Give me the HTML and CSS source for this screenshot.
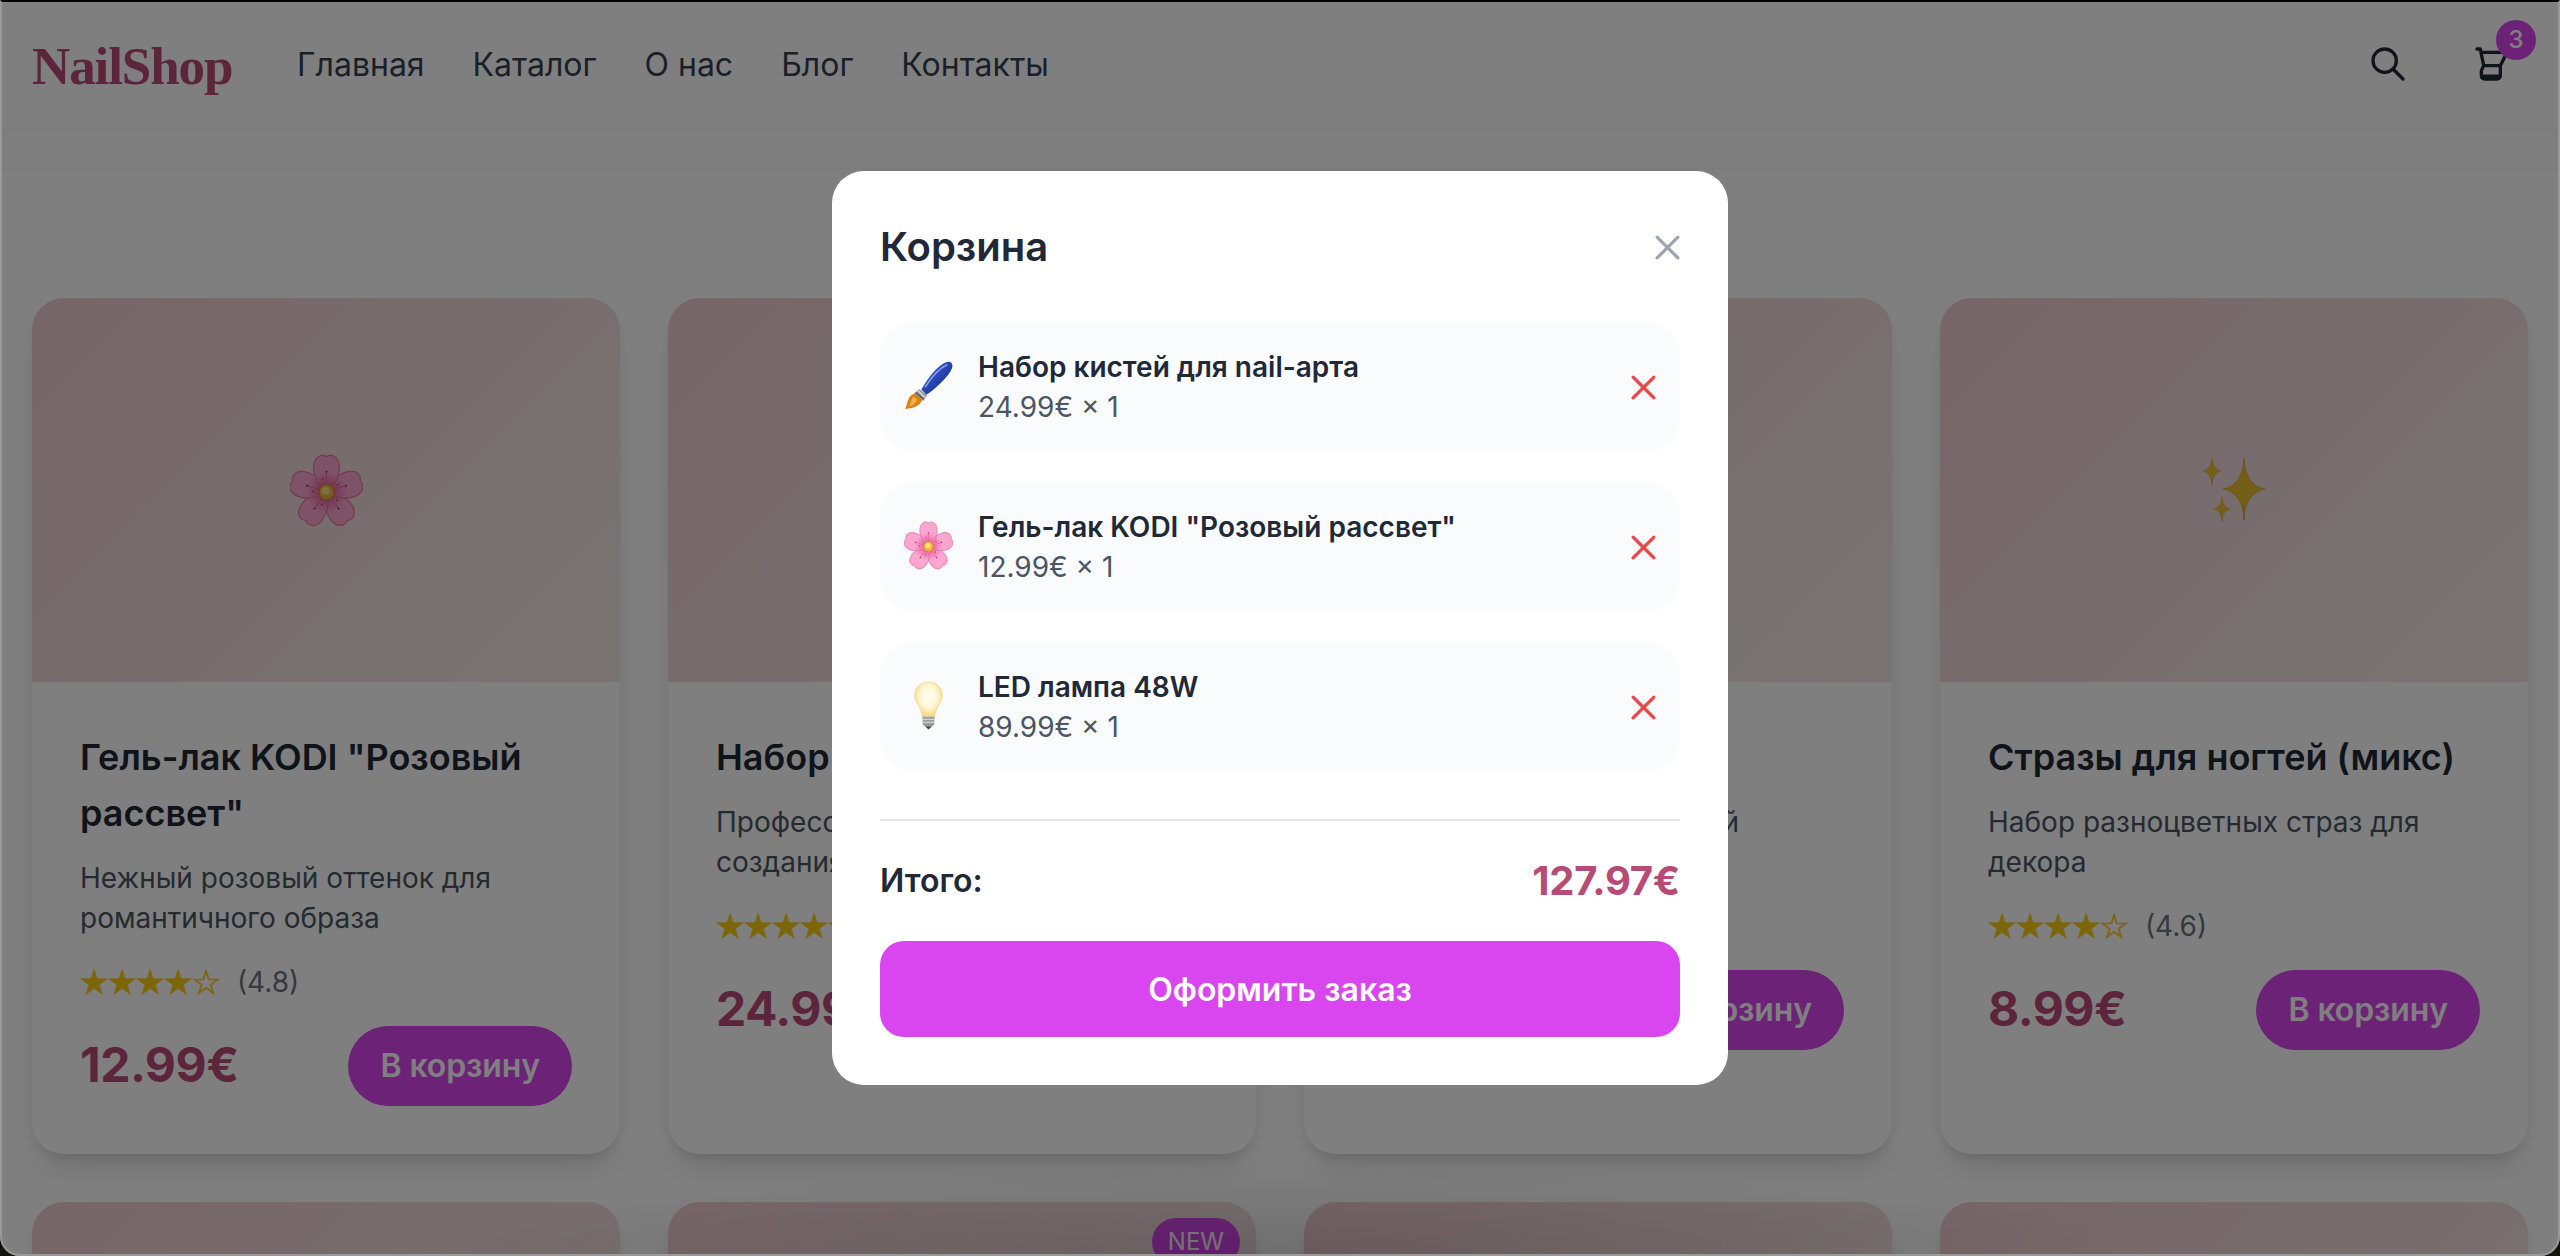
FILE: index.html
```html
<!DOCTYPE html>
<html lang="ru">
<head>
<meta charset="utf-8">
<title>NailShop</title>
<link rel="stylesheet" href="styles.css">
</head>
<body>
<svg class="sprite" aria-hidden="true">
  <defs>
    <radialGradient id="petal-fill" gradientUnits="userSpaceOnUse" cx="24" cy="25" r="25">
      <stop offset="0" stop-color="#d93a80"/><stop offset=".28" stop-color="#f07aae"/><stop offset=".55" stop-color="#fda6d4"/><stop offset="1" stop-color="#fba6cd"/>
    </radialGradient>
    <linearGradient id="handle-fill" x1="0" y1="0" x2="1" y2="1">
      <stop offset="0" stop-color="#6f8de8"/><stop offset=".4" stop-color="#2b4cc0"/><stop offset="1" stop-color="#14236e"/>
    </linearGradient>
    <radialGradient id="bulb-fill" cx=".5" cy=".42" r=".58">
      <stop offset="0" stop-color="#fffef8"/><stop offset=".55" stop-color="#fff6d2"/><stop offset="1" stop-color="#f3d77c"/>
    </radialGradient>
    <path id="petal" d="M24 25C19 22 14.800 14 15.600 7.500C16.200 2 20.500 -.5 24 1.800C27.500 -.5 31.800 2 32.400 7.500C33.200 14 29 22 24 25Z" fill="url(#petal-fill)" stroke="#e0709c" stroke-width=".7"/>
    <g id="stamen"><path d="M24 20V12" stroke="#e0609a" stroke-width=".5"/><circle cx="24" cy="11.600" r=".65" fill="#8a2450"/><circle cx="21.700" cy="16.500" r=".5" fill="#8a2450"/></g>
    <path id="spark" d="M0-32Q1-3.500 14 0Q1 3.500 0 32Q-1-0 0 32Q-1 3.500-14 0Q-1-3.500 0-32Z"/>
  </defs>
  <symbol id="flower" viewBox="0 0 48 48">
    <use href="#petal" transform="rotate(144 24 25)"/><use href="#petal" transform="rotate(216 24 25)"/>
    <use href="#petal" transform="rotate(72 24 25)"/><use href="#petal" transform="rotate(288 24 25)"/><use href="#petal"/>
    <use href="#stamen"/><use href="#stamen" transform="rotate(72 24 25)"/><use href="#stamen" transform="rotate(144 24 25)"/><use href="#stamen" transform="rotate(216 24 25)"/><use href="#stamen" transform="rotate(288 24 25)"/>
    <circle cx="24" cy="25" r="5" fill="#eeb53a" stroke="#cf7c35" stroke-width=".6"/><circle cx="23.500" cy="24.200" r="2.600" fill="#fbe27a"/>
  </symbol>
  <symbol id="brush" viewBox="0 0 48 48">
    <path d="M17 28C23 17 33 4 42 1C46 0 48.500 3 47 7C44 15 31 27 22 33Z" fill="url(#handle-fill)"/>
    <path d="M21 25C27 16 35 7 42 4" stroke="#a9bcf5" stroke-width="1.600" stroke-linecap="round" fill="none" opacity=".75"/>
    <path d="M15 27.500L22.500 33.500L19 39L9.500 32Z" fill="#8d9297"/><path d="M13.500 29L20.500 35.500" stroke="#d9dcde" stroke-width="1.500"/><path d="M11.500 31L19.500 37.500" stroke="#4d5154" stroke-width="1"/>
    <path d="M10 32L18 37.500C17 42.500 11 46.500 1 47C4 42 3 34 10 32Z" fill="#d98212"/><path d="M9 35C7 38 7 41 5 44.500C9 43 12 41 13 37.500Z" fill="#f6b24a"/>
  </symbol>
  <symbol id="bulb" viewBox="0 0 48 48">
    <path d="M24 1C32 1 37.500 6.500 37.500 14C37.500 21.500 31 25 30 35H18C17 25 10.500 21.500 10.500 14C10.500 6.500 16 1 24 1Z" fill="url(#bulb-fill)" stroke="#ead08a" stroke-width=".6"/>
    <path d="M18 35H30L29.500 43L26.500 45L24 47.500L21.500 45L18.500 43Z" fill="#9a9d9f"/><path d="M18 37.500H30M18.500 40.500H29.500" stroke="#dfe1e2" stroke-width="1"/><path d="M21 44.500H27L24 47.500Z" fill="#444"/>
  </symbol>
  <symbol id="sparkles" viewBox="0 0 64 64">
    <g fill="#e8bd30" stroke="#d29a28" stroke-width=".5"><use href="#spark" transform="translate(42 31) scale(1.5 .97)"/><use href="#spark" transform="translate(10 13) scale(.66 .45)"/><use href="#spark" transform="translate(20 51) scale(.62 .4)"/></g>
  </symbol>
  <symbol id="cross" viewBox="0 0 24 24"><path d="M2 2L22 22M22 2L2 22" stroke="currentColor" stroke-width="3" stroke-linecap="round" fill="none"/></symbol>
</svg>

<div class="window">
  <header class="header">
    <div class="logo">NailShop</div>
    <nav class="nav"><a>Главная</a><a>Каталог</a><a>О нас</a><a>Блог</a><a>Контакты</a></nav>
    <div class="actions">
      <button class="icon-button"><svg class="icon" viewBox="0 0 24 24"><path d="M21 21l-6-6m2-5a7 7 0 11-14 0 7 7 0 0114 0z"/></svg></button>
      <button class="icon-button"><svg class="icon" viewBox="0 0 24 24"><path d="M3 3h2l.4 2M7 13h10l4-8H5.400M7 13L5.400 5M7 13l-1.400 3v3a2 2 0 002 2h7.400a2 2 0 002-2v-6M6 19.300h10.500"/></svg><span class="count">3</span></button>
    </div>
  </header>
  <div class="strip"></div>

  <main class="grid">
    <article class="card">
      <div class="cover"><svg class="cover-flower"><use href="#flower"/></svg></div>
      <div class="body">
        <h3 class="title">Гель-лак KODI "Розовый рассвет"</h3>
        <p class="desc">Нежный розовый оттенок для романтичного образа</p>
        <div class="rating"><span class="stars">★★★★☆</span><span class="score">(4.8)</span></div>
        <div class="buy"><span class="price">12.99€</span><button class="add">В корзину</button></div>
      </div>
    </article>
    <article class="card">
      <div class="cover"></div>
      <div class="body">
        <h3 class="title">Набор</h3>
        <p class="desc">Професс<br>создания</p>
        <div class="rating"><span class="stars">★★★★★</span></div>
        <div class="buy"><span class="price">24.99€</span></div>
      </div>
    </article>
    <article class="card">
      <div class="cover"></div>
      <div class="body">
        <h3 class="title">LED лампа 48W</h3>
        <p class="desc desc-led">Профессиональный</p>
        <div class="rating"></div>
        <div class="buy buy-end"><button class="add">В корзину</button></div>
      </div>
    </article>
    <article class="card">
      <div class="cover"><svg class="cover-sparkles"><use href="#sparkles"/></svg></div>
      <div class="body">
        <h3 class="title">Стразы для ногтей (микс)</h3>
        <p class="desc">Набор разноцветных страз для декора</p>
        <div class="rating"><span class="stars">★★★★☆</span><span class="score">(4.6)</span></div>
        <div class="buy"><span class="price">8.99€</span><button class="add">В корзину</button></div>
      </div>
    </article>
    <article class="card"><div class="cover"></div></article>
    <article class="card"><div class="cover"><span class="tag">NEW</span></div></article>
    <article class="card"><div class="cover"></div></article>
    <article class="card"><div class="cover"></div></article>
  </main>

  <div class="overlay">
    <section class="modal">
      <div class="modal-head"><h2 class="modal-title">Корзина</h2><button class="close"><svg class="cross"><use href="#cross"/></svg></button></div>
      <ul class="items">
        <li class="item"><svg class="emoji"><use href="#brush"/></svg><div class="info"><div class="name">Набор кистей для nail-арта</div><div class="qty">24.99€ × 1</div></div><button class="remove"><svg class="cross"><use href="#cross"/></svg></button></li>
        <li class="item"><svg class="emoji"><use href="#flower"/></svg><div class="info"><div class="name">Гель-лак KODI "Розовый рассвет"</div><div class="qty">12.99€ × 1</div></div><button class="remove"><svg class="cross"><use href="#cross"/></svg></button></li>
        <li class="item"><svg class="emoji"><use href="#bulb"/></svg><div class="info"><div class="name">LED лампа 48W</div><div class="qty">89.99€ × 1</div></div><button class="remove"><svg class="cross"><use href="#cross"/></svg></button></li>
      </ul>
      <div class="total"><span class="total-label">Итого:</span><span class="total-sum">127.97€</span></div>
      <button class="checkout">Оформить заказ</button>
    </section>
  </div>
  <div class="frame"></div>
</div>
</body>
</html>
```
FILE: styles.css
```css
*, *::before, *::after { box-sizing: border-box; margin: 0; padding: 0; }
html, body { height: 100%; overflow: hidden; background: #10140c; }
body { font-family: Inter, "Noto Sans", sans-serif; font-size: 32px; line-height: 48px; color: #1f2937; }
button { border: 0; background: none; font: inherit; color: inherit; }
ul { list-style: none; }
.sprite { position: absolute; width: 0; height: 0; }

.window { position: relative; height: 1256px; overflow: hidden; background: #fff; border-radius: 0 0 20px 20px; }

.header { display: flex; align-items: center; height: 130px; padding: 0 32px; border-bottom: 2px solid #f6f6f7; background: #fff; }
.logo { font-family: "Liberation Serif", serif; font-weight: 700; font-size: 53px; line-height: 64px; letter-spacing: -1.100px; color: #b84a76; width: 201px; margin-top: 3px; white-space: nowrap; }
.nav { display: flex; gap: 48px; margin-left: 64px; padding-top: 2px; color: #374151; }
.actions { display: flex; gap: 32px; margin-left: auto; }
.icon-button { position: relative; display: flex; padding: 16px; }
.icon { width: 40px; height: 40px; fill: none; stroke: #1f2937; stroke-width: 2; stroke-linecap: round; stroke-linejoin: round; }
.count { position: absolute; top: -8px; right: -8px; width: 40px; height: 40px; border-radius: 50%; background: #d946ef; color: #fff; font-size: 24px; line-height: 39px; font-weight: 500; text-align: center; }
.strip { height: 40px; background: #fcfcfc; border-bottom: 2px solid #f7f7f7; }

.grid { display: grid; grid-template-columns: repeat(4, 1fr); grid-auto-rows: 856px; gap: 48px; padding: 128px 32px 0; }
.card { display: flex; flex-direction: column; background: #fff; border-radius: 32px; box-shadow: 0 20px 30px -6px rgba(0, 0, 0, .1), 0 8px 12px -4px rgba(0, 0, 0, .1); overflow: hidden; }
.cover { position: relative; display: flex; align-items: center; justify-content: center; height: 384px; background: linear-gradient(135deg, #efccd2 0%, #f0dadc 50%, #f2e8e6 100%); }
.cover-flower { width: 73px; height: 73px; }
.cover-sparkles { width: 64px; height: 64px; }
.tag { position: absolute; top: 16px; right: 16px; padding: 8px 16px; border-radius: 24px; background: #d946ef; color: #fff; font-size: 24px; line-height: 32px; }
.body { padding: 47px 48px 48px; }
.title { font-size: 36px; line-height: 56px; font-weight: 600; margin-bottom: 17px; }
.desc { min-height: 80px; font-size: 28px; line-height: 40px; color: #4b5563; margin-bottom: 24px; }
.desc-led { width: 387px; text-align: right; }
.rating { display: flex; align-items: center; gap: 18px; height: 40px; margin-bottom: 24px; }
.stars { margin-left: -1px; font-family: "DejaVu Sans", sans-serif; font-size: 34px; line-height: 40px; letter-spacing: -2.500px; color: #facc15; -webkit-text-stroke: .7px #facc15; }
.score { font-size: 28px; line-height: 40px; color: #6b7280; }
.buy { display: flex; align-items: center; justify-content: space-between; height: 80px; }
.buy-end { justify-content: flex-end; }
.price { margin-top: -2px; font-size: 48px; line-height: 64px; font-weight: 700; letter-spacing: -.5px; color: #b84a76; }
.add { padding: 16px 32px; border-radius: 40px; background: #d946ef; color: #fff; font-weight: 600; letter-spacing: -.1px; }

.overlay { position: absolute; inset: 0; display: flex; align-items: center; justify-content: center; background: radial-gradient(ellipse 900px 90px at 50% 100%, rgba(0, 0, 0, .13), transparent), rgba(0, 0, 0, .5); }
.modal { width: 896px; padding: 48px; background: #fff; border-radius: 32px; }
.modal-head { display: flex; align-items: center; justify-content: space-between; margin-bottom: 48px; }
.modal-title { font-size: 40px; line-height: 56px; font-weight: 600; }
.close, .remove { display: flex; }
.close { color: #9ca3af; }
.remove { color: #ef4444; }
.cross { width: 25px; height: 25px; }
.items { display: flex; flex-direction: column; gap: 32px; margin-bottom: 48px; }
.item { display: flex; align-items: center; height: 128px; padding: 24px; border-radius: 32px; background: #fafbfc; }
.emoji { width: 49px; height: 49px; margin: 0 25px 4px 0; }
.info { flex: 1; font-size: 28px; line-height: 40px; }
.name { font-weight: 600; }
.qty { color: #4b5563; }
.total { display: flex; align-items: center; justify-content: space-between; padding: 32px 0; border-top: 2px solid #e5e7eb; }
.total-label { font-weight: 600; }
.total-sum { font-size: 40px; line-height: 56px; font-weight: 700; letter-spacing: -.25px; color: #b84a76; }
.checkout { display: block; width: 100%; height: 96px; padding-top: 1px; border-radius: 24px; background: #d946ef; color: #fff; font-weight: 600; }

.frame { position: absolute; inset: 0; border: 2px solid #999; border-top-color: #000; border-radius: 0 0 20px 20px; }
```
